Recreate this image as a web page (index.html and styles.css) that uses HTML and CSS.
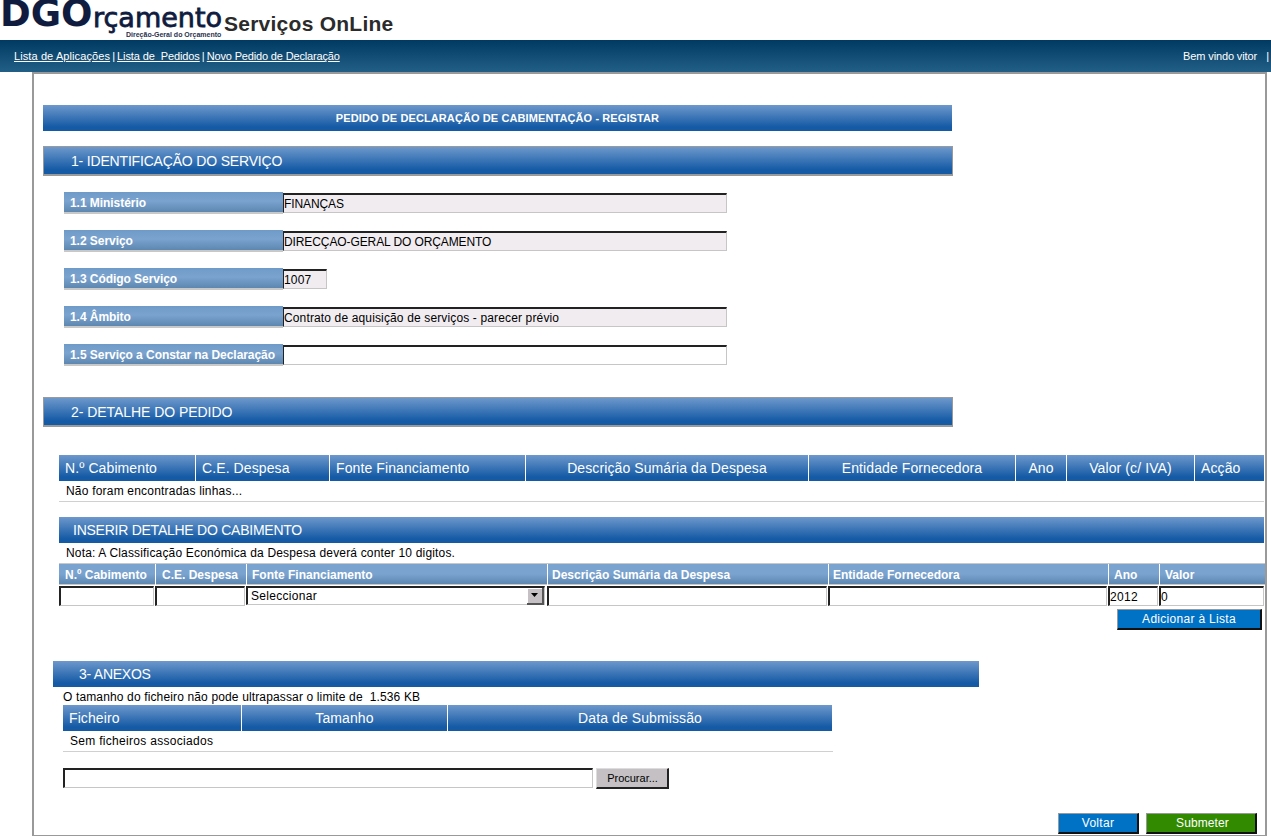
FILE: index.html
```html
<!DOCTYPE html>
<html lang="pt">
<head>
<meta charset="utf-8">
<title>Serviços OnLine</title>
<link rel="stylesheet" href="styles.css">
</head>
<body>
<header class="top">
  <div class="logo">
    <span class="logo-dgo">DGO</span><span class="logo-orc">rçamento</span>
    <span class="logo-sub">Direção-Geral do Orçamento</span>
  </div>
  <div class="site-title">Serviços OnLine</div>
</header>
<nav class="nav">
  <div class="nav-links"><a class="l1" href="#">Lista de Aplicações</a> | <a class="l2" href="#">Lista de&nbsp; Pedidos</a> | <a class="l3" href="#">Novo Pedido de Declaração</a></div>
  <div class="nav-user"><span class="welcome">Bem vindo vitor</span> &nbsp;&nbsp;|</div>
</nav>
<main class="frame">
  <h1 class="title-bar">PEDIDO DE DECLARAÇÃO DE CABIMENTAÇÃO - REGISTAR</h1>
  <h2 class="section s1">1- IDENTIFICAÇÃO DO SERVIÇO</h2>
  <div class="fields">
    <div class="field"><label class="flabel">1.1 Ministério</label><input class="fin ro up" value="FINANÇAS"></div>
    <div class="field"><label class="flabel">1.2 Serviço</label><input class="fin ro up" value="DIRECÇAO-GERAL DO ORÇAMENTO"></div>
    <div class="field"><label class="flabel">1.3 Código Serviço</label><input class="fin ro short lc" value="1007"></div>
    <div class="field"><label class="flabel">1.4 Âmbito</label><input class="fin ro lc" value="Contrato de aquisição de serviços - parecer prévio"></div>
    <div class="field"><label class="flabel">1.5 Serviço a Constar na Declaração</label><input class="fin" value=""></div>
  </div>
  <h2 class="section s2">2- DETALHE DO PEDIDO</h2>
  <div class="detail">
    <div class="thead cols-a">
      <div>N.º Cabimento</div><div>C.E. Despesa</div><div>Fonte Financiamento</div><div class="c">Descrição Sumária da Despesa</div><div class="c">Entidade Fornecedora</div><div class="c">Ano</div><div class="c">Valor (c/ IVA)</div><div>Acção</div>
    </div>
    <div class="empty">Não foram encontradas linhas...</div>
    <div class="bar insert">INSERIR DETALHE DO CABIMENTO</div>
    <div class="note">Nota: A Classificação Económica da Despesa deverá conter 10 digitos.</div>
    <div class="lhead cols-b">
      <div>N.º Cabimento</div><div>C.E. Despesa</div><div>Fonte Financiamento</div><div>Descrição Sumária da Despesa</div><div>Entidade Fornecedora</div><div>Ano</div><div>Valor</div>
    </div>
    <div class="irow cols-b">
      <input class="cin" value="">
      <input class="cin" value="">
      <div class="sel"><span>Seleccionar</span><span class="sel-btn"><svg width="9" height="5" viewBox="0 0 9 5"><path d="M1 0h7L4.500 4z" fill="#000"/></svg></span></div>
      <input class="cin" value="">
      <input class="cin" value="">
      <input class="cin" value="2012">
      <input class="cin" value="0">
    </div>
    <div class="add-row"><button class="btn blue add">Adicionar à Lista</button></div>
  </div>
  <h2 class="bar s3">3- ANEXOS</h2>
  <div class="attach">
    <div class="limit">O tamanho do ficheiro não pode ultrapassar o limite de &nbsp;1.536 KB</div>
    <div class="thead cols-c"><div>Ficheiro</div><div class="c">Tamanho</div><div class="c">Data de Submissão</div></div>
    <div class="empty">Sem ficheiros associados</div>
    <div class="file-row"><input class="fin file" value=""><button class="browse">Procurar...</button></div>
  </div>
  <div class="actions"><button class="btn blue voltar">Voltar</button><button class="btn green submeter">Submeter</button></div>
</main>
</body>
</html>
```
FILE: styles.css
```css
* { box-sizing: border-box; }
html, body { margin: 0; padding: 0; }
body { width: 1271px; height: 837px; overflow: hidden; background: #fff; font-family: "Liberation Sans", Arial, sans-serif; font-size: 12px; color: #000; }
.top { height: 40px; display: flex; align-items: flex-start; }
.logo { position: relative; width: 224px; height: 40px; flex: none; color: #0f1c3f; white-space: nowrap; }
.logo-dgo { position: absolute; left: 0; top: 0; font: 700 37px/27px "DejaVu Sans", sans-serif; }
.logo-orc { position: absolute; left: 93px; top: 5px; font: 400 27px/26px "DejaVu Sans", sans-serif; -webkit-text-stroke: .8px #0f1c3f; }
.logo-sub { position: absolute; left: 126px; top: 31px; font: 700 7px/8px "Liberation Sans", sans-serif; white-space: nowrap; color: #2a3350; }
.site-title { margin-top: 12px; font: 700 21px/24px "Liberation Sans", sans-serif; color: #2b2b2b; letter-spacing: .25px; }
.nav { height: 32px; display: flex; justify-content: space-between; padding: 9px 2px 0 14px; background: linear-gradient(#003a63, #225f86); color: #fff; font-size: 11px; line-height: 14px; white-space: nowrap; }
.nav a { color: #fff; }
.l1 { letter-spacing: .1px; margin-right: -1px; }
.l2 { letter-spacing: -.1px; margin: 0 -1px; }
.l3 { letter-spacing: -.16px; margin-left: -1px; }
.welcome { letter-spacing: -.13px; }
.frame { margin-left: 32px; width: 1235px; height: 764px; border: 2px solid #999; border-width: 2px 2px 1px 2px; padding: 31px 0 0 9px; }
.title-bar { margin: 0; width: 909px; height: 26px; background: linear-gradient(#6d98cb, #145aa5 85%); color: #fff; font-size: 11px; letter-spacing: .1px; line-height: 26px; font-weight: 700; text-align: center; }
.section { margin: 0; height: 30px; width: 910px; background: linear-gradient(#6d98cb, #145aa5 85%); border: 1px solid #9a9a9a; border-width: 1px 1px 2px 1px; color: #fff; font-weight: 400; font-size: 14px; line-height: 28px; padding-left: 27px; }
.s1 { margin-top: 15px; letter-spacing: -.18px; }
.s2 { margin-top: 0; letter-spacing: -.05px; }
.fields { padding: 16px 0 0 21px; height: 221px; display: flex; flex-direction: column; gap: 16px; }
.field { display: flex; align-items: flex-end; height: 22px; }
.flabel { width: 219px; height: 22px; background: linear-gradient(#6f9ac8, #7ba3cf 45%, #5d86b1); border-bottom: 2px solid #c8c8c8; color: #fff; font-weight: 700; font-size: 12px; letter-spacing: -.05px; line-height: 23px; padding-left: 6px; white-space: nowrap; }
.fin { width: 444px; height: 20px; margin-bottom: 1px; border: 1px solid #c6c6c6; border-top: 2px solid #222; border-left: 1px solid #222; padding: 0; font: 12px/16px "Liberation Sans", sans-serif; background: #fff; color: #000; border-radius: 0; outline: 0; }
.ro { background: #f0ecf0; }
.up { letter-spacing: -.1px; }
.lc { letter-spacing: .14px; }
.short { width: 44px; }
.detail { padding: 28px 0 0 16px; width: 1222px; }
.thead { height: 26px; background: linear-gradient(#6d98cb, #145aa5 85%); color: #fff; font-size: 14px; line-height: 26px; display: grid; letter-spacing: .1px; }
.thead > div { padding-left: 6px; border-left: 1px solid #fff; white-space: nowrap; }
.thead > div:first-child { border-left: 0; }
.thead > .c { text-align: center; padding-left: 0; }
.cols-a { grid-template-columns: 136px 134px 196px 283px 207px 51px 128px 70px; width: 1205px; }
.cols-b { grid-template-columns: 96px 91px 301px 281px 280px 51px 106px; width: 1206px; }
.cols-c { grid-template-columns: 178px 206px 385px; width: 769px; }
.empty { height: 21px; border-bottom: 1px solid #d0d0d0; line-height: 21px; padding-left: 7px; letter-spacing: .3px; }
.detail .empty { width: 1205px; letter-spacing: .2px; }
.bar { margin: 0; height: 26px; background: linear-gradient(#6d98cb, #145aa5 85%); color: #fff; font-weight: 400; font-size: 14px; line-height: 26px; letter-spacing: -.25px; }
.insert { margin-top: 15px; width: 1205px; padding-left: 14px; }
.note { height: 20px; line-height: 21px; padding-left: 7px; letter-spacing: .17px; }
.lhead { height: 22px; display: grid; background: linear-gradient(#7ba3cf, #7ba3cf 50%, #5d86b1); border-top: 1px solid #c8c8c8; border-bottom: 1px solid #c8c8c8; color: #fff; font-weight: 700; font-size: 12px; line-height: 22px; }
.lhead > div { padding-left: 6px; border-left: 1px solid #fff; white-space: nowrap; }
.lhead > div:first-child { border-left: 0; }
.lhead > div:nth-child(3) { padding-left: 5px; }
.lhead > div:nth-child(n+4) { padding-left: 4px; }
.lhead > div:nth-child(n+6) { padding-left: 5px; }
.irow { display: grid; margin-top: 1px; height: 20px; }
.cin { width: calc(100% - 1px); height: 20px; border: 1px solid #c6c6c6; border-top: 2px solid #222; border-left: 2px solid #222; padding: 0; font: 12px/16px "Liberation Sans", sans-serif; letter-spacing: .3px; background: #fff; color: #000; border-radius: 0; outline: 0; }
.sel { display: flex; justify-content: space-between; align-items: center; width: 299px; height: 19px; border: 1px solid #c6c6c6; border-top: 2px solid #222; border-left: 2px solid #222; padding-left: 3px; letter-spacing: .3px; }
.sel-btn { width: 17px; height: 17px; display: flex; align-items: center; justify-content: center; background: #c4c0c4; border: 1px solid #555; border-width: 0 2px 2px 0; box-shadow: inset 1px 1px 0 #fff; }
.add-row { display: flex; justify-content: flex-end; padding: 3px 3px 0 0; width: 1206px; }
.btn { border: 1px solid #999; border-right: 2px solid #111; border-bottom: 2px solid #111; color: #fff; font: 12px/16px "Liberation Sans", sans-serif; letter-spacing: .3px; padding: 0; border-radius: 0; }
.blue { background: #0072c6; }
.green { background: #318a00; }
.add { width: 145px; height: 21px; }
.s3 { margin: 31px 0 0 10px; width: 926px; padding-left: 26px; }
.attach { padding-left: 20px; }
.limit { height: 18px; line-height: 20px; letter-spacing: .14px; white-space: nowrap; }
.attach .empty { width: 770px; }
.file-row { display: flex; gap: 3px; margin-top: 16px; }
.file { width: 530px; margin-bottom: 0; border-left-width: 2px; }
.browse { width: 73px; height: 21px; background: #c4c0c4; border: 1px solid #ddd; border-right: 2px solid #222; border-bottom: 2px solid #222; font: 11px/15px "Liberation Sans", sans-serif; padding: 0 0 0 1px; color: #000; border-radius: 0; }
.actions { display: flex; gap: 7px; padding: 24px 0 0 1015px; }
.voltar { width: 81px; height: 21px; }
.submeter { width: 111px; height: 21px; letter-spacing: .1px; padding-left: 3px; }
```
